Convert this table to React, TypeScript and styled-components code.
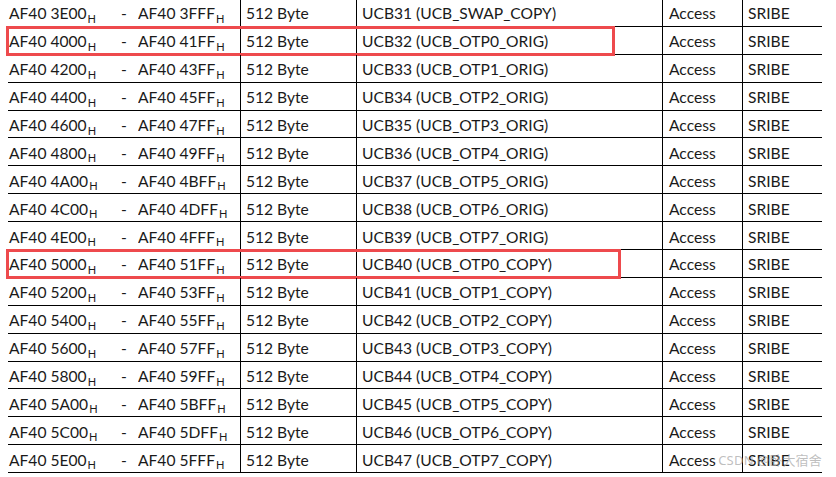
import React from "react";
import styled, { createGlobalStyle } from "styled-components";

const Global = createGlobalStyle`
  html, body { margin: 0; padding: 0; background: #fff; }
  body { overflow: hidden; }
`;

const Page = styled.div`
  position: relative;
  width: 836px;
  height: 477px;
  overflow: hidden;
  padding-left: 8px;
  box-sizing: border-box;
  font-family: Lato, "Noto Sans", sans-serif;
  font-size: 15.6px;
  color: #1a1a1a;
`;

const Table = styled.div`
  width: 814px;
  margin-top: -1px;
  display: flex;
  flex-direction: column;
`;

const Row = styled.div`
  position: relative;
  display: grid;
  grid-template-columns: 113px 17px 102px 116px 306px 80px 80px;
  height: 27.9px;
  box-sizing: border-box;
  border-bottom: 1px solid #000;
`;

const Cell = styled.div<{ $line?: boolean; $pad?: number }>`
  display: flex;
  align-items: center;
  padding-left: ${(p) => p.$pad ?? 6}px;
  padding-top: 2px;
  border-left: ${(p) => (p.$line ? "1px solid #000" : "none")};
  white-space: nowrap;
  overflow: hidden;
`;

const Sub = styled.span`
  font-size: 11px;
  position: relative;
  top: 5px;
  margin-left: 1px;
`;

const Mark = styled.div<{ $w: number }>`
  position: absolute;
  left: -2px;
  top: -1px;
  width: ${(p) => p.$w}px;
  height: 30px;
  border: 3px solid #ee4a4d;
  box-sizing: border-box;
  pointer-events: none;
`;

const Watermark = styled.div`
  position: absolute;
  right: 14px;
  bottom: 8px;
  font-family: "Noto Sans", "Noto Sans CJK SC", sans-serif;
  font-size: 13px;
  color: rgba(170, 170, 170, 0.75);
  letter-spacing: 0.2px;
`;

type R = { s: string; e: string; n: string; mark?: number };

const rows: R[] = [
  { s: "3E00", e: "3FFF", n: "UCB31 (UCB_SWAP_COPY)" },
  { s: "4000", e: "41FF", n: "UCB32 (UCB_OTP0_ORIG)", mark: 609 },
  { s: "4200", e: "43FF", n: "UCB33 (UCB_OTP1_ORIG)" },
  { s: "4400", e: "45FF", n: "UCB34 (UCB_OTP2_ORIG)" },
  { s: "4600", e: "47FF", n: "UCB35 (UCB_OTP3_ORIG)" },
  { s: "4800", e: "49FF", n: "UCB36 (UCB_OTP4_ORIG)" },
  { s: "4A00", e: "4BFF", n: "UCB37 (UCB_OTP5_ORIG)" },
  { s: "4C00", e: "4DFF", n: "UCB38 (UCB_OTP6_ORIG)" },
  { s: "4E00", e: "4FFF", n: "UCB39 (UCB_OTP7_ORIG)" },
  { s: "5000", e: "51FF", n: "UCB40 (UCB_OTP0_COPY)", mark: 615 },
  { s: "5200", e: "53FF", n: "UCB41 (UCB_OTP1_COPY)" },
  { s: "5400", e: "55FF", n: "UCB42 (UCB_OTP2_COPY)" },
  { s: "5600", e: "57FF", n: "UCB43 (UCB_OTP3_COPY)" },
  { s: "5800", e: "59FF", n: "UCB44 (UCB_OTP4_COPY)" },
  { s: "5A00", e: "5BFF", n: "UCB45 (UCB_OTP5_COPY)" },
  { s: "5C00", e: "5DFF", n: "UCB46 (UCB_OTP6_COPY)" },
  { s: "5E00", e: "5FFF", n: "UCB47 (UCB_OTP7_COPY)" },
];

export default function App() {
  return (
    <>
      <Global />
      <Page>
        <Table>
          {rows.map((r) => (
            <Row key={r.s}>
              <Cell $pad={1}>
                AF40 {r.s}
                <Sub>H</Sub>
              </Cell>
              <Cell $pad={0}>-</Cell>
              <Cell $pad={0}>
                AF40 {r.e}
                <Sub>H</Sub>
              </Cell>
              <Cell $line $pad={5}>512 Byte</Cell>
              <Cell $line $pad={5}>{r.n}</Cell>
              <Cell $line $pad={6}>Access</Cell>
              <Cell $line $pad={5}>SRIBE</Cell>
              {r.mark ? <Mark $w={r.mark} /> : null}
            </Row>
          ))}
        </Table>
        <Watermark>CSDN @卧大宿舍</Watermark>
      </Page>
    </>
  );
}
